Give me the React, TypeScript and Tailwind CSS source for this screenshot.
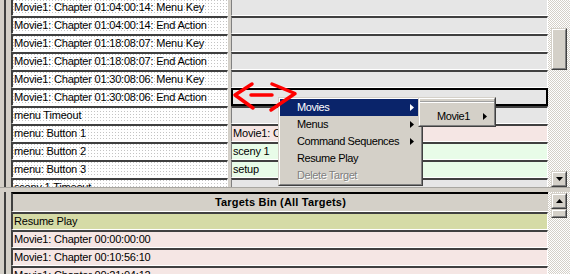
import React from "react";

type Row = { l: string; r: string; c: "gray" | "pink" | "green"; sel?: boolean };

const topRows: Row[] = [
  { l: "Movie1: Chapter 01:04:00:14: Menu Key", r: "", c: "gray" },
  { l: "Movie1: Chapter 01:04:00:14: End Action", r: "", c: "gray" },
  { l: "Movie1: Chapter 01:18:08:07: Menu Key", r: "", c: "gray" },
  { l: "Movie1: Chapter 01:18:08:07: End Action", r: "", c: "gray" },
  { l: "Movie1: Chapter 01:30:08:06: Menu Key", r: "", c: "gray" },
  { l: "Movie1: Chapter 01:30:08:06: End Action", r: "", c: "gray", sel: true },
  { l: "menu Timeout", r: "", c: "gray" },
  { l: "menu: Button 1", r: "Movie1: Chapter 00:00:00:00", c: "pink" },
  { l: "menu: Button 2", r: "sceny 1", c: "green" },
  { l: "menu: Button 3", r: "setup", c: "green" },
  { l: "sceny 1 Timeout", r: "", c: "gray" },
];

const rightBg: Record<string, string> = {
  gray: "bg-[#e6e6e6]",
  pink: "bg-[#f5e6e4]",
  green: "bg-[#e8fce8]",
};

const bottomRows = [
  { t: "Resume Play", bg: "bg-[#d5dba6]" },
  { t: "Movie1: Chapter 00:00:00:00", bg: "bg-[#f5e6e4]" },
  { t: "Movie1: Chapter 00:10:56:10", bg: "bg-[#f5e6e4]" },
  { t: "Movie1: Chapter 00:21:04:12", bg: "bg-[#f5e6e4]" },
];

function Raised({ className, children }: { className?: string; children?: React.ReactNode }) {
  return (
    <div className={`border border-t-[#d4d0c8] border-l-[#d4d0c8] border-b-[#404040] border-r-[#404040] ${className ?? ""}`}>
      <div className="w-full h-full border border-t-white border-l-white border-b-[#808080] border-r-[#808080] bg-[#d4d0c8] flex items-center justify-center">
        {children}
      </div>
    </div>
  );
}

function Tri({ dir }: { dir: "up" | "down" }) {
  return (
    <svg width="7" height="4" viewBox="0 0 7 4">
      {dir === "down" ? <polygon points="0,0 7,0 3.5,4" fill="#000" /> : <polygon points="0,4 7,4 3.5,0" fill="#000" />}
    </svg>
  );
}

function Arrow({ color }: { color: string }) {
  return (
    <svg width="4" height="7" viewBox="0 0 4 7">
      <polygon points="0,0 4,3.5 0,7" fill={color} />
    </svg>
  );
}

const checker =
  "bg-[conic-gradient(#ffffff_25%,#d4d0c8_0_50%,#ffffff_0_75%,#d4d0c8_0)] bg-[length:2px_2px]";
const dotted =
  "bg-[#c4c4c4] bg-[linear-gradient(90deg,transparent_1px,#ffffff_1px),linear-gradient(transparent_1px,#ffffff_1px)] bg-[length:3px_3px]";

export default function App() {
  return (
    <div className="relative w-[570px] h-[274px] overflow-hidden bg-[#d4d0c8] text-black text-[11px] font-['Liberation_Sans',Arial,sans-serif]">
      <div className="flex flex-col h-full">
        {/* top pane */}
        <div className="flex h-[187px] overflow-hidden">
          <div className="w-[11px] h-full flex">
            <div className="ml-[4px] w-[2px] h-full bg-[#404040]" />
          </div>
          <div className="w-[537px] flex flex-col -mt-[2px]">
            {topRows.map((r, i) => (
              <div key={i} className="flex h-[18px] shrink-0">
                <div
                  className={`w-[217px] h-full border-t-2 border-l-2 border-t-[#404040] border-l-[#404040] border-b border-r border-b-white border-r-white ${dotted} pl-[1px] leading-[15px] tracking-[-0.2px] whitespace-nowrap overflow-hidden`}
                >
                  {r.l}
                </div>
                <div className="w-[3px]" />
                <div
                  className={`w-[317px] h-full ${rightBg[r.c]} ${
                    r.sel
                      ? "border-2 border-black"
                      : "border-t-2 border-t-[#404040] border-l border-l-[#808080] border-b border-b-white border-r border-r-white"
                  } pl-[1px] leading-[15px] tracking-[-0.2px] whitespace-nowrap overflow-hidden`}
                >
                  {r.r}
                </div>
              </div>
            ))}
          </div>
          <div className={`w-[22px] h-full flex flex-col items-center ${checker}`}>
            <div className="h-[28px]" />
            <Raised className="w-[16px] h-[42px]" />
            <div className="flex-1" />
            <Raised className="w-[16px] h-[16px]">
              <Tri dir="down" />
            </Raised>
          </div>
        </div>
        {/* separator */}
        <div className="h-[5px] border-t border-t-[#a8a6a0]" />
        {/* bottom pane */}
        <div className="flex flex-1 overflow-hidden">
          <div className="w-[11px] h-full flex">
            <div className="ml-[4px] w-[2px] h-full bg-[#404040]" />
          </div>
          <div className="w-[537px] flex flex-col">
            <div className="h-[20px] shrink-0 border-t-2 border-t-black border-l-2 border-l-[#404040] border-b border-b-white bg-[#d4d0c8] font-bold text-center leading-[17px] tracking-[0.2px]">
              Targets Bin (All Targets)
            </div>
            {bottomRows.map((r, i) => (
              <div
                key={i}
                className={`h-[18px] shrink-0 ${r.bg} border-t-2 border-l-2 border-t-[#404040] border-l-[#404040] border-b border-r border-b-white border-r-white pl-[1px] leading-[15px] tracking-[-0.2px] whitespace-nowrap`}
              >
                {r.t}
              </div>
            ))}
          </div>
          <div className={`w-[22px] h-full flex flex-col items-center ${checker}`}>
            <div className="h-[1px]" />
            <Raised className="w-[16px] h-[16px]">
              <Tri dir="up" />
            </Raised>
            <Raised className="w-[16px] h-[9px]" />
          </div>
        </div>
      </div>

      {/* context menu */}
      <div className="absolute left-[278px] top-[97px] w-[145px] h-[89px] border border-t-[#d4d0c8] border-l-[#d4d0c8] border-b-[#404040] border-r-[#404040]">
        <div className="w-full h-full border border-t-white border-l-white border-b-[#808080] border-r-[#808080] bg-[#d4d0c8] flex flex-col tracking-[-0.4px]">
          {[
            { t: "Movies", arrow: true, hi: true },
            { t: "Menus", arrow: true },
            { t: "Command Sequences", arrow: true },
            { t: "Resume Play" },
            { t: "Delete Target", dis: true },
          ].map((it, i) => (
            <div
              key={i}
              className={`h-[17px] shrink-0 flex items-center justify-between pl-[17px] pr-[7px] ${
                it.hi ? "bg-[#0a246a] text-white" : ""
              } ${it.dis ? "text-[#808080] [text-shadow:1px_1px_0_#ffffff]" : ""}`}
            >
              <span>{it.t}</span>
              {it.arrow ? <Arrow color={it.hi ? "#ffffff" : "#000000"} /> : null}
            </div>
          ))}
        </div>
      </div>

      {/* submenu */}
      <div className="absolute left-[418px] top-[97px] w-[78px] h-[30px] border border-t-[#d4d0c8] border-l-[#d4d0c8] border-b-[#404040] border-r-[#404040]">
        <div className="w-full h-full border border-t-white border-l-white border-b-[#808080] border-r-[#808080] bg-[#d4d0c8] flex flex-col tracking-[-0.4px]">
          <div className="h-[9px] shrink-0 pt-[2px]">
            <div className="h-[2px] border-t border-t-[#a0a0a0] border-b border-b-white" />
          </div>
          <div className="h-[17px] shrink-0 flex items-center justify-between pl-[17px] pr-[7px]">
            <span>Movie1</span>
            <Arrow color="#000000" />
          </div>
        </div>
      </div>

      {/* red annotation arrow */}
      <svg className="absolute left-[228px] top-[78px]" width="72" height="40" viewBox="0 0 72 40">
        <g stroke="#ff0000" strokeWidth="3.5" fill="none" strokeLinecap="round" strokeLinejoin="round">
          <polyline points="24,6 7,17 25,30" />
          <line x1="23" y1="17" x2="44" y2="17" />
          <polyline points="44,6 67,15.5 43,32" />
        </g>
      </svg>
    </div>
  );
}
